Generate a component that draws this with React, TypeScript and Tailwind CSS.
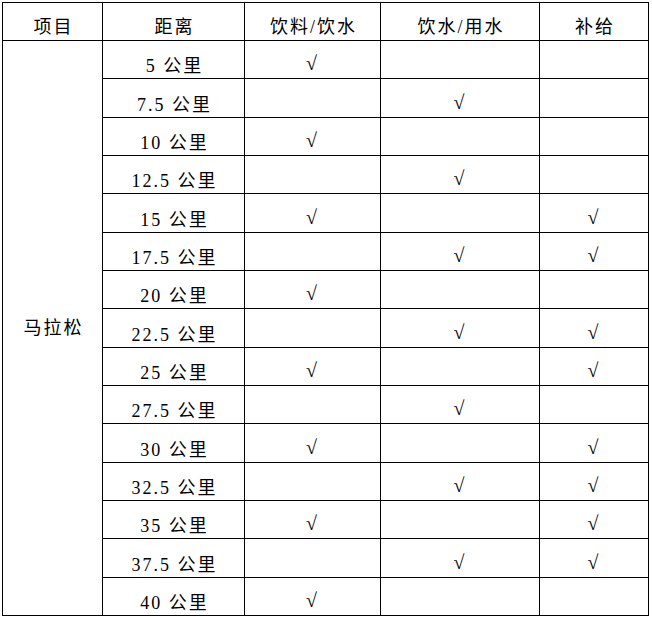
import React from "react";

const rows: [string, boolean, boolean, boolean][] = [
  ["5", true, false, false],
  ["7.5", false, true, false],
  ["10", true, false, false],
  ["12.5", false, true, false],
  ["15", true, false, true],
  ["17.5", false, true, true],
  ["20", true, false, false],
  ["22.5", false, true, true],
  ["25", true, false, true],
  ["27.5", false, true, false],
  ["30", true, false, true],
  ["32.5", false, true, true],
  ["35", true, false, true],
  ["37.5", false, true, true],
  ["40", true, false, false],
];

const font = { fontFamily: '"Liberation Serif", "Noto Sans CJK SC", serif' };

function Check({ on }: { on: boolean }) {
  return (
    <td className="border border-black text-center align-bottom pb-[4px] text-[20px] leading-[22px]">
      {on ? "√" : ""}
    </td>
  );
}

const th = "border border-black font-normal align-bottom pb-[2px] pl-[2px] leading-[22px]";

export default function App() {
  return (
    <div className="bg-white w-[652px] h-[617px] pt-[2px] pl-[2px] text-black" style={font}>
      <table className="border-collapse table-fixed w-[646px] text-[18px] tracking-[2px]">
        <colgroup>
          <col className="w-[100px]" />
          <col className="w-[142px]" />
          <col className="w-[136px]" />
          <col className="w-[159px]" />
          <col className="w-[109px]" />
        </colgroup>
        <thead>
          <tr className="h-[38px]">
            <th className={th}>项目</th>
            <th className={th}>距离</th>
            <th className={th}>饮料/饮水</th>
            <th className={th}>饮水/用水</th>
            <th className={th}>补给</th>
          </tr>
        </thead>
        <tbody>
          {rows.map(([d, a, b, c], i) => (
            <tr key={d} className="h-[38.33px]">
              {i === 0 && (
                <td rowSpan={15} className="border border-black text-center align-middle pl-[2px] leading-[22px]">
                  马拉松
                </td>
              )}
              <td className="border border-black text-center align-bottom pb-[1px] pl-[2px] leading-[22px]">
                {d} 公里
              </td>
              <Check on={a} />
              <Check on={b} />
              <Check on={c} />
            </tr>
          ))}
        </tbody>
      </table>
    </div>
  );
}
